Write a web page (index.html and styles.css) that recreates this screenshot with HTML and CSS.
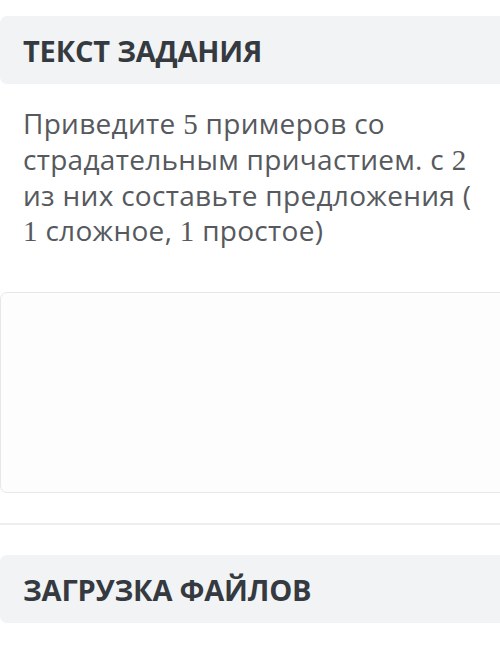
FILE: index.html
```html
<!DOCTYPE html>
<html lang="ru">
<head>
    <meta charset="UTF-8">
    <meta name="viewport" content="width=device-width, initial-scale=1.0">
    <title>Текст задания</title>
    <link rel="stylesheet" href="styles.css">
</head>
<body>
    <main class="task">
        <section class="block">
            <h2 class="block-title">ТЕКСТ ЗАДАНИЯ</h2>
            <p class="task-text">Приведите <span class="num">5</span> примеров со страдательным причастием. с <span class="num">2</span> из них составьте предложения ( <span class="num">1</span> сложное, <span class="num">1</span> простое)</p>
            <div class="answer-box"></div>
        </section>
        <hr class="divider">
        <section class="block">
            <h2 class="block-title">ЗАГРУЗКА ФАЙЛОВ</h2>
        </section>
    </main>
</body>
</html>
```

FILE: styles.css
```css
body {
    font-family: "Open Sans", "Noto Sans", sans-serif;
    background-color: #fff;
    margin: 0;
    padding: 0;
    overflow: hidden;
}

.task {
    width: 512px;
    padding-top: 16px;
}

.block-title {
    margin: 0;
    height: 68px;
    display: flex;
    align-items: center;
    padding: 0 23px;
    background-color: #f1f3f5;
    border-radius: 7px;
    color: #343a40;
    font-size: 29px;
    font-weight: 700;
    letter-spacing: -0.2px;
}

.task-text {
    margin: 22px 0 0;
    padding: 0 23px;
    width: 462px;
    color: #56595d;
    font-size: 28px;
    line-height: 35px;
    letter-spacing: 0.3px;
}

.num {
    font-family: "Liberation Serif", serif;
    font-size: 29px;
}

.answer-box {
    margin-top: 43px;
    height: 199px;
    border: 1px solid #e6e7e8;
    border-radius: 7px;
    background-color: #fdfdfd;
}

.divider {
    margin: 30px 0;
    border: none;
    border-top: 2px solid #eceeef;
}
```
